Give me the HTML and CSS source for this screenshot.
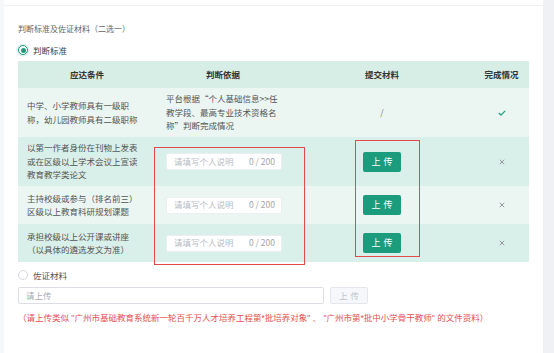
FILE: index.html
```html
<!DOCTYPE html>
<html lang="zh-CN">
<head>
<meta charset="utf-8">
<title>判断标准及佐证材料</title>
<link rel="stylesheet" href="styles.css">
</head>
<body>
<div class="page">
  <div class="gutter"></div>
  <main class="card">
    <div class="content">
      <div class="title">判断标准及佐证材料（二选一）</div>
      <label class="radio">
        <span class="radio-dot checked"></span>
        <span class="radio-label">判断标准</span>
      </label>

      <div class="table">
        <div class="row head">
          <div class="cell c">应达条件</div>
          <div class="cell c">判断依据</div>
          <div class="cell c">提交材料</div>
          <div class="cell c">完成情况</div>
        </div>
        <div class="row tall light">
          <div class="cell txt">中学、小学教师具有一级职称，幼儿园教师具有二级职称</div>
          <div class="cell txt col2">平台根据“个人基础信息&gt;&gt;任教学段、最高专业技术资格名称”判断完成情况</div>
          <div class="cell c slash">/</div>
          <div class="cell c">
            <svg class="ok" width="8" height="6" viewBox="0 0 8 6"><path d="M0.8 3 L3 5 L7.2 0.9" fill="none" stroke="#27a384" stroke-width="1.3"/></svg>
          </div>
        </div>
        <div class="row tall dark">
          <div class="cell txt">以第一作者身份在刊物上发表或在区级以上学术会议上宣读教育教学类论文</div>
          <div class="cell col2">
            <div class="field"><span class="ph">请填写个人说明</span><span class="count">0 / 200</span></div>
          </div>
          <div class="cell c"><button class="btn">上传</button></div>
          <div class="cell c">
            <svg width="6" height="6" viewBox="0 0 6 6"><path d="M0.8 0.8 L5.2 5.2 M5.2 0.8 L0.8 5.2" stroke="#8a8d93" stroke-width="0.9"/></svg>
          </div>
        </div>
        <div class="row short light">
          <div class="cell txt">主持校级或参与（排名前三）区级以上教育科研规划课题</div>
          <div class="cell col2">
            <div class="field"><span class="ph">请填写个人说明</span><span class="count">0 / 200</span></div>
          </div>
          <div class="cell c"><button class="btn">上传</button></div>
          <div class="cell c">
            <svg width="6" height="6" viewBox="0 0 6 6"><path d="M0.8 0.8 L5.2 5.2 M5.2 0.8 L0.8 5.2" stroke="#8a8d93" stroke-width="0.9"/></svg>
          </div>
        </div>
        <div class="row short dark">
          <div class="cell txt">承担校级以上公开课或讲座（以具体的遴选发文为准）</div>
          <div class="cell col2">
            <div class="field"><span class="ph">请填写个人说明</span><span class="count">0 / 200</span></div>
          </div>
          <div class="cell c"><button class="btn">上传</button></div>
          <div class="cell c">
            <svg width="6" height="6" viewBox="0 0 6 6"><path d="M0.8 0.8 L5.2 5.2 M5.2 0.8 L0.8 5.2" stroke="#8a8d93" stroke-width="0.9"/></svg>
          </div>
        </div>

        <div class="mark mark-a"></div>
        <div class="mark mark-b"></div>
      </div>

      <label class="radio radio-2">
        <span class="radio-dot"></span>
        <span class="radio-label">佐证材料</span>
      </label>

      <div class="upload">
        <div class="upload-input">请上传</div>
        <button class="btn-disabled">上传</button>
      </div>

      <p class="note">（请上传类似 "广州市基础教育系统新一轮百千万人才培养工程第*批培养对象" 、 "广州市第*批中小学骨干教师" 的文件资料）</p>
    </div>
  </main>
  <div class="track"></div>
</div>
</body>
</html>
```

FILE: styles.css
```css
* { box-sizing: border-box; }

html, body {
  margin: 0;
  padding: 0;
  background: #ffffff;
}

body {
  font-family: "Noto Sans CJK SC", "Noto Sans", sans-serif;
  font-size: 8.5px;
  color: #555;
}

.page {
  display: flex;
  width: 554px;
  height: 353px;
  overflow: hidden;
}

.gutter {
  width: 4px;
  background: #f6f7f9;
  flex: none;
}

.track {
  width: 11px;
  background: #eff1f5;
  flex: none;
}

.card {
  flex: 1;
  background: #fff;
  padding-top: 5px;
}

.content {
  border-top: 1px solid #f0f1f3;
  padding: 0 14px;
}

.title {
  margin-top: 17px;
  font-size: 8px;
  line-height: 12px;
  color: #666;
}

.radio {
  display: flex;
  align-items: center;
  height: 12px;
  margin-top: 9px;
  gap: 5px;
}

.radio-dot {
  width: 10px;
  height: 10px;
  border-radius: 50%;
  border: 1px solid #d4d7dd;
  background: #fff;
  display: flex;
  align-items: center;
  justify-content: center;
}

.radio-dot.checked {
  border-color: #1e9c7d;
  box-shadow: 0 0 0 1.5px rgba(30, 156, 125, 0.15);
}

.radio-dot.checked::after {
  content: "";
  width: 5px;
  height: 5px;
  border-radius: 50%;
  background: #1e9c7d;
}

.radio-label {
  font-size: 8.5px;
  color: #444;
  line-height: 12px;
}

.table {
  position: relative;
  margin-top: 5px;
  width: 511px;
}

.row {
  display: grid;
  grid-template-columns: 138px 134px 184px 55px;
  align-items: center;
}

.row.head {
  height: 27px;
  background: #d7eee7;
  font-weight: 700;
  color: #333;
}

.row.tall { height: 49px; }
.row.short { height: 38px; }
.row.light { background: #ebf6f3; }
.row.dark { background: #d9efe9; }

.cell {
  line-height: 13.5px;
  color: #555;
}

.row.head .cell { color: #333; }

.cell.c {
  text-align: center;
  display: flex;
  justify-content: center;
  align-items: center;
}

.cell.txt {
  padding: 0 12px 0 9px;
}

.cell.col2 {
  padding: 0 7px 0 10px;
}

.slash { color: #777; }

.field {
  width: 116px;
  height: 17px;
  background: #fff;
  border: 1px solid #eceef1;
  border-radius: 2px;
  display: flex;
  justify-content: space-between;
  align-items: center;
  padding: 0 6px 0 7px;
}

.ph { color: #b9bcc3; }
.count { color: #a3a6ad; }

.btn {
  font-family: inherit;
  width: 38px;
  height: 20px;
  border: none;
  border-radius: 2px;
  background: #1b9c7c;
  color: #fff;
  font-size: 9px;
  letter-spacing: 3px;
  padding: 0 0 0 3px;
  line-height: 20px;
}

.mark {
  position: absolute;
  border: 1.5px solid #e04a4a;
  pointer-events: none;
}

.mark-a {
  left: 136px;
  top: 86px;
  width: 151px;
  height: 118px;
}

.mark-b {
  left: 337px;
  top: 79px;
  width: 65px;
  height: 117px;
}

.radio-2 {
  margin-top: 7px;
}

.radio-2 .radio-label { color: #555; }

.upload {
  display: flex;
  gap: 6px;
  margin-top: 6px;
}

.upload-input {
  width: 306px;
  height: 17px;
  border: 1px solid #dcdfe6;
  border-radius: 2px;
  padding-left: 7px;
  line-height: 15px;
  color: #a8abb2;
}

.btn-disabled {
  font-family: inherit;
  width: 38px;
  height: 17px;
  border: 1px solid #e4e7ed;
  border-radius: 2px;
  background: #f5f7fa;
  color: #c0c4cc;
  font-size: 8.5px;
  letter-spacing: 3px;
  padding: 0 0 0 3px;
  line-height: 15px;
}

.note {
  margin: 8px 0 0;
  line-height: 12px;
  color: #e5504e;
  white-space: nowrap;
  font-family: "Liberation Sans", "Noto Sans CJK SC", sans-serif;
}
```
